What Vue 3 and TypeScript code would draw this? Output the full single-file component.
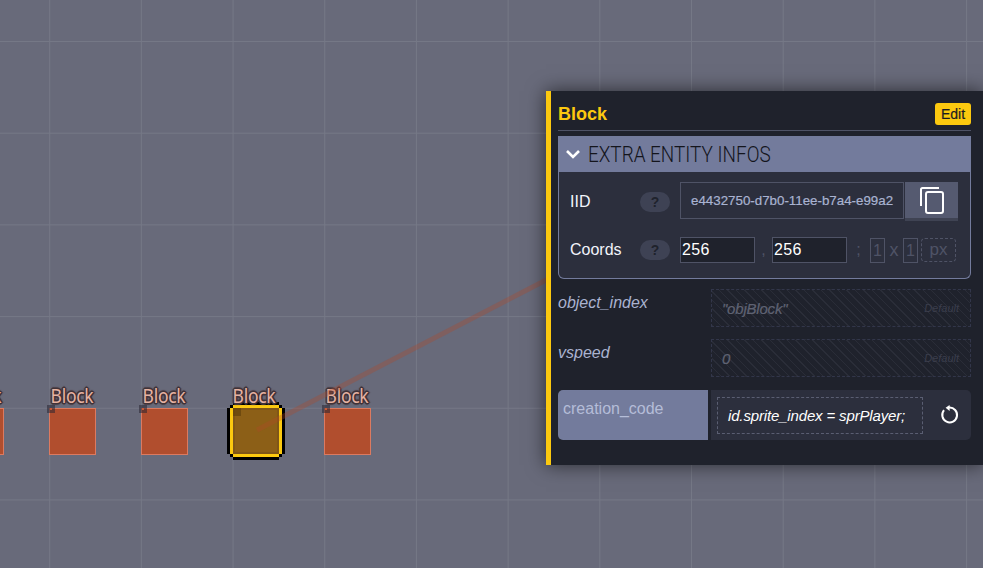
<template>
  <div class="level">
    <div
      v-for="b in blocks"
      :key="b.x"
      class="entity"
      :class="{ selected: b.selected }"
      :style="{ left: b.x + 'px' }"
    >
      <span class="entity-name">Block</span>
      <i class="pivot"></i>
    </div>

    <svg class="link" width="983" height="568">
      <line x1="257" y1="430" x2="548" y2="279" stroke="#b04628" stroke-opacity="0.32" stroke-width="5" />
    </svg>

    <aside class="panel">
      <header class="panel-head">
        <h2>Block</h2>
        <button class="edit-btn">Edit</button>
      </header>

      <section class="infos">
        <div class="infos-head">
          <svg width="16" height="12" viewBox="0 0 16 12">
            <path d="M2 3l6 6 6-6" fill="none" stroke="#fff" stroke-width="2.6" />
          </svg>
          <span>EXTRA ENTITY INFOS</span>
        </div>
        <div class="infos-body">
          <div class="row iid-row">
            <label>IID</label>
            <span class="help">?</span>
            <div class="iid-value">e4432750-d7b0-11ee-b7a4-e99a2</div>
            <button class="copy-btn">
              <svg width="26" height="28" viewBox="0 0 26 28">
                <path d="M2 20V3.5Q2 2 3.5 2H20" fill="none" stroke="#fff" stroke-width="2" />
                <rect x="7" y="6" width="17" height="21" rx="2" fill="none" stroke="#fff" stroke-width="2" />
              </svg>
            </button>
          </div>
          <div class="row coords-row">
            <label>Coords</label>
            <span class="help">?</span>
            <div class="coord">256</div>
            <span class="sep comma">,</span>
            <div class="coord">256</div>
            <span class="sep semi">;</span>
            <span class="unit">1</span>
            <span class="sep times">x</span>
            <span class="unit">1</span>
            <span class="px">px</span>
          </div>
        </div>
      </section>

      <div v-for="f in defaults" :key="f.name" class="field">
        <span class="field-name">{{ f.name }}</span>
        <div class="field-default">
          <span class="default-value">{{ f.value }}</span>
          <span class="default-tag">Default</span>
        </div>
      </div>

      <div class="code-field">
        <span class="code-name">creation_code</span>
        <div class="code-box">
          <div class="code-value">id.sprite_index = sprPlayer;</div>
          <svg class="reset" width="20" height="20" viewBox="0 0 20 20">
            <path d="M5 5.2A7.4 7.4 0 1 0 10 2.6" fill="none" stroke="#fff" stroke-width="2" />
            <path d="M10.6 0v6L6.6 2.8z" fill="#fff" />
          </svg>
        </div>
      </div>
    </aside>
  </div>
</template>

<script setup lang="ts">
interface Block {
  x: number
  selected?: boolean
}

const blocks: Block[] = [
  { x: -43 },
  { x: 49 },
  { x: 141 },
  { x: 233, selected: true },
  { x: 324 }
]

const defaults = [
  { name: 'object_index', value: '"objBlock"' },
  { name: 'vspeed', value: '0' }
]
</script>

<style>
html,
body {
  margin: 0;
  overflow: hidden;
}
</style>

<style scoped>
.level {
  position: relative;
  width: 983px;
  height: 568px;
  overflow: hidden;
  background-color: #686a7a;
  background-image:
    linear-gradient(to right, #757886 1px, transparent 1px),
    linear-gradient(to bottom, #757886 1px, transparent 1px);
  background-size: 91.7px 91.7px;
  background-position: 49.2px 41px;
  font-family: "Liberation Sans", Arial, sans-serif;
}

.entity {
  position: absolute;
  top: 408px;
  width: 47px;
  height: 47px;
  box-sizing: border-box;
  background: #b14e2e;
  border: 1px solid #dc7a60;
}

.entity-name {
  position: absolute;
  left: 50%;
  bottom: 47px;
  margin-left: -1px;
  transform: translateX(-50%) scaleX(0.92);
  font-family: "Noto Sans", sans-serif;
  font-size: 19px;
  line-height: 22px;
  letter-spacing: -0.3px;
  color: #e6b2a2;
  text-shadow:
    1px 0 0 #3f3238, -1px 0 0 #3f3238, 0 1px 0 #3f3238, 0 -1px 0 #3f3238,
    1px 1px 0 #3f3238, -1px -1px 0 #3f3238, 1px -1px 0 #3f3238, -1px 1px 0 #3f3238,
    2px 0 1px #4a3d44, -2px 0 1px #4a3d44, 0 2px 1px #4a3d44, 0 -2px 1px #4a3d44;
}

.pivot {
  position: absolute;
  left: -3px;
  top: -4px;
  width: 8px;
  height: 8px;
  background: rgba(40, 36, 50, 0.55);
}

.pivot::after {
  content: "";
  position: absolute;
  left: 3px;
  top: 3px;
  width: 2px;
  height: 2px;
  background: #c95a38;
}

.entity.selected {
  width: 46px;
  height: 46px;
  background: #8c5f17;
  border: 2px solid #7f5618;
  box-shadow:
    0 -3px 0 #fcc90f, 0 3px 0 #fcc90f, -3px 0 0 #fcc90f, 3px 0 0 #fcc90f,
    0 -6px 0 #000, 0 6px 0 #000, -6px 0 0 #000, 6px 0 0 #000,
    -3px -3px 0 #000, 3px -3px 0 #000, -3px 3px 0 #000, 3px 3px 0 #000;
}

.entity.selected .entity-name {
  margin-left: -2px;
  bottom: 45px;
}

.entity.selected .pivot {
  left: -2px;
  top: -2px;
  background: rgba(90, 60, 10, 0.6);
}

.entity.selected .pivot::after {
  display: none;
}

.link {
  position: absolute;
  left: 0;
  top: 0;
}

.panel {
  position: absolute;
  left: 546px;
  top: 91px;
  width: 437px;
  height: 374px;
  box-sizing: border-box;
  padding: 12px 12px 0 7px;
  background: #1f222c;
  border-left: 5px solid #fcc90f;
  box-shadow: 0 0 18px rgba(0, 0, 0, 0.6);
}

.panel-head {
  display: flex;
  align-items: center;
  justify-content: space-between;
  height: 27px;
  border-bottom: 1px solid #4f5366;
  margin-bottom: 5px;
}

.panel-head h2 {
  margin: 0 0 5px;
  font-size: 18px;
  font-weight: bold;
  color: #fcc90f;
}

.edit-btn {
  width: 36px;
  height: 22px;
  margin-bottom: 6px;
  padding: 0;
  border: 0;
  border-radius: 3px;
  background: #fcc90f;
  color: #1b1b22;
  font-family: inherit;
  font-size: 14px;
  -webkit-text-stroke: 0.2px #1b1b22;
}

.infos {
  box-sizing: border-box;
  height: 143px;
  border: 1px solid #737b9c;
  border-top: 0;
  border-radius: 0 0 6px 6px;
  background: #2c2f3d;
}

.infos-head {
  display: flex;
  align-items: center;
  gap: 7px;
  height: 36px;
  margin: 0 -1px;
  padding-left: 7px;
  background: #737b9c;
}

.infos-head span {
  margin-top: 1px;
  font-family: Roboto, sans-serif;
  font-weight: 300;
  font-size: 22px;
  color: #14151c;
  transform: scaleX(0.86);
  transform-origin: left center;
  white-space: nowrap;
}

.infos-body {
  padding: 10px 12px 0 11px;
}

.row {
  display: flex;
  align-items: center;
  color: #f2f4fa;
  font-size: 16px;
}

.row label {
  width: 70px;
}

.help {
  width: 30px;
  height: 20px;
  margin-right: 10px;
  border-radius: 10px;
  background: #3e4254;
  color: #1f222c;
  font-size: 14px;
  font-weight: bold;
  line-height: 20px;
  text-align: center;
}

.iid-row {
  height: 39px;
  margin-bottom: 16px;
}

.iid-value {
  box-sizing: border-box;
  width: 224px;
  height: 37px;
  margin-right: 1px;
  margin-bottom: 2px;
  padding-left: 10px;
  overflow: hidden;
  white-space: nowrap;
  border: 1px solid #4f5366;
  color: #a9b3d1;
  font-size: 13.33px;
  line-height: 35px;
  -webkit-text-stroke: 0.2px #a9b3d1;
}

.copy-btn {
  display: flex;
  align-items: center;
  justify-content: center;
  width: 53px;
  height: 39px;
  padding: 0;
  border: 0;
  border-bottom: 3px solid #3f4353;
  background: #555a70;
}

.coords-row {
  height: 26px;
}

.coord {
  box-sizing: border-box;
  width: 75px;
  height: 26px;
  padding-left: 1px;
  border: 1px solid #4f5366;
  background: #1f222c;
  color: #fff;
  letter-spacing: 0.4px;
  line-height: 24px;
}

.sep {
  color: #4f5366;
  text-align: center;
}

.comma {
  width: 17px;
}

.semi {
  width: 23px;
}

.times {
  width: 18px;
  font-size: 18px;
}

.unit {
  box-sizing: border-box;
  width: 15px;
  height: 25px;
  border: 1px solid #4f5366;
  color: #4f5366;
  line-height: 23px;
  text-align: center;
}

.px {
  box-sizing: border-box;
  width: 35px;
  height: 24px;
  margin-left: 3px;
  border: 1px dashed #4f5366;
  border-radius: 4px;
  color: #4f5366;
  font-size: 17px;
  line-height: 21px;
  text-align: center;
}

.field {
  display: flex;
  height: 38px;
  margin-top: 12px;
}

.infos + .field {
  margin-top: 10px;
}

.field-name {
  width: 153px;
  padding-top: 5px;
  color: #aab3d0;
  font-size: 16px;
  font-style: italic;
}

.field-default {
  flex: 1;
  display: flex;
  align-items: center;
  justify-content: space-between;
  box-sizing: border-box;
  padding: 0 11px 0 10px;
  border: 1px dashed #32364a;
  background: repeating-linear-gradient(45deg, #2a2d38 0 1px, #1f222c 1px 6px);
}

.default-value {
  color: #5f6373;
  font-size: 15px;
  font-style: italic;
  letter-spacing: -0.2px;
  -webkit-text-stroke: 0.2px #5f6373;
}

.default-tag {
  color: #3b3e4c;
  font-size: 11px;
  font-style: italic;
}

.code-field {
  display: flex;
  height: 50px;
  margin-top: 13px;
}

.code-name {
  box-sizing: border-box;
  width: 150px;
  margin-right: 3px;
  padding: 10px 0 0 5px;
  border-radius: 5px 0 0 5px;
  background: #737b9c;
  color: #b5bdd8;
  font-size: 16px;
}

.code-box {
  flex: 1;
  display: flex;
  align-items: center;
  padding-left: 6px;
  border-radius: 0 5px 5px 0;
  background: #2c2f3d;
}

.code-value {
  box-sizing: border-box;
  width: 206px;
  height: 37px;
  padding-left: 10px;
  border: 1px dashed #5a5e72;
  color: #fff;
  font-size: 15px;
  font-style: italic;
  letter-spacing: -0.15px;
  line-height: 35px;
  white-space: nowrap;
}

.reset {
  margin-left: 16px;
}
</style>
